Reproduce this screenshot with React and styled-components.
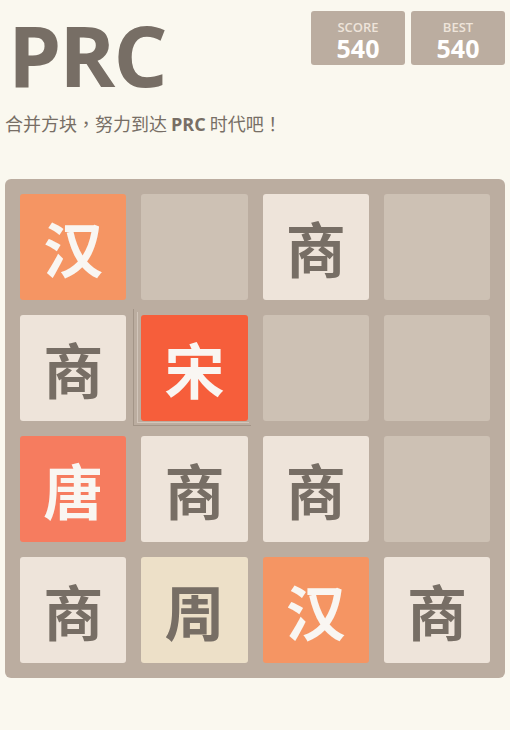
import React from "react";
import styled, { createGlobalStyle } from "styled-components";

const GlobalStyle = createGlobalStyle`
  html, body {
    margin: 0;
    padding: 0;
    background: #faf8ef;
  }
  body {
    font-family: "Open Sans", "Noto Sans CJK SC", sans-serif;
    color: #776e65;
  }
`;

const Container = styled.div`
  width: 500px;
  margin: 0 auto;
  padding-top: 12px;
`;

const Heading = styled.div`
  display: flex;
  justify-content: space-between;
  align-items: flex-start;
`;

const Title = styled.h1`
  margin: 0;
  padding-left: 3px;
  font-family: "Open Sans", sans-serif;
  font-weight: 700;
  font-size: 85px;
  line-height: 85px;
  letter-spacing: -2px;
  color: #776e65;
`;

const Scores = styled.div`
  display: flex;
  gap: 6px;
  margin-top: -1px;
`;

const ScoreBox = styled.div`
  width: 94px;
  height: 54px;
  box-sizing: border-box;
  padding-top: 10px;
  background: #bbada0;
  border-radius: 3px;
  display: flex;
  flex-direction: column;
  align-items: center;
`;

const ScoreLabel = styled.div`
  font-size: 13px;
  font-weight: 600;
  line-height: 13px;
  color: #eee4da;
  text-transform: uppercase;
`;

const ScoreValue = styled.div`
  margin-top: 2px;
  font-size: 25px;
  font-weight: 700;
  line-height: 25px;
  color: #ffffff;
`;

const Intro = styled.p`
  margin: 14px 0 0 0;
  font-size: 18px;
  line-height: 24px;
  color: #776e65;
  font-family: "Noto Sans CJK SC", sans-serif;
  b {
    font-family: "Open Sans", sans-serif;
    font-weight: 700;
  }
`;

/* centred full-width punctuation */
const Punct = styled.span`
  font-family: "Noto Sans CJK TC", sans-serif;
`;

const Board = styled.div`
  margin-top: 43px;
  box-sizing: border-box;
  width: 500px;
  height: 499px;
  padding: 15px;
  background: #bbada0;
  border-radius: 6px;
  display: grid;
  grid-template-columns: repeat(4, 1fr);
  grid-template-rows: repeat(4, 1fr);
  gap: 15px;
`;

const palette = {
  empty: { bg: "#cdc1b4", fg: "transparent" },
  shang: { bg: "#eee4da", fg: "#776e65" },
  zhou: { bg: "#ede0c8", fg: "#776e65" },
  han: { bg: "#f59563", fg: "#f9f6f2" },
  tang: { bg: "#f67c5f", fg: "#f9f6f2" },
  song: { bg: "#f65e3b", fg: "#f9f6f2" },
};

const Tile = styled.div`
  position: relative;
  box-sizing: border-box;
  border-radius: 3px;
  background: ${(p) => palette[p.$kind].bg};
  color: ${(p) => palette[p.$kind].fg};
  display: flex;
  align-items: center;
  justify-content: center;
  font-family: "Noto Sans CJK SC", sans-serif;
  font-weight: 700;
  font-size: 60px;
  line-height: 1;

  /* faint trail left behind by a freshly merged tile */
  ${(p) =>
    p.$merged &&
    `
    &::before, &::after {
      content: "";
      position: absolute;
      pointer-events: none;
      border-left: 1px solid rgba(140, 125, 112, 0.5);
      border-bottom: 1px solid rgba(140, 125, 112, 0.5);
    }
    &::before {
      left: -8px;
      top: -6px;
      right: -3px;
      bottom: -5px;
    }
    &::after {
      left: -4px;
      top: -3px;
      right: -1px;
      bottom: -2px;
      border-color: rgba(225, 215, 205, 0.6);
    }
  `}
`;

const names = {
  shang: "商",
  zhou: "周",
  han: "汉",
  tang: "唐",
  song: "宋",
  empty: "",
};

const grid = [
  ["han", "empty", "shang", "empty"],
  ["shang", "song", "empty", "empty"],
  ["tang", "shang", "shang", "empty"],
  ["shang", "zhou", "han", "shang"],
];

export default function App() {
  return (
    <>
      <GlobalStyle />
      <Container>
        <Heading>
          <Title>PRC</Title>
          <Scores>
            <ScoreBox>
              <ScoreLabel>Score</ScoreLabel>
              <ScoreValue>540</ScoreValue>
            </ScoreBox>
            <ScoreBox>
              <ScoreLabel>Best</ScoreLabel>
              <ScoreValue>540</ScoreValue>
            </ScoreBox>
          </Scores>
        </Heading>
        <Intro>
          合并方块<Punct>，</Punct>努力到达 <b>PRC</b> 时代吧<Punct>！</Punct>
        </Intro>
        <Board>
          {grid.flatMap((row, r) =>
            row.map((kind, c) => (
              <Tile key={`${r}-${c}`} $kind={kind} $merged={kind === "song"}>
                {names[kind]}
              </Tile>
            ))
          )}
        </Board>
      </Container>
    </>
  );
}
